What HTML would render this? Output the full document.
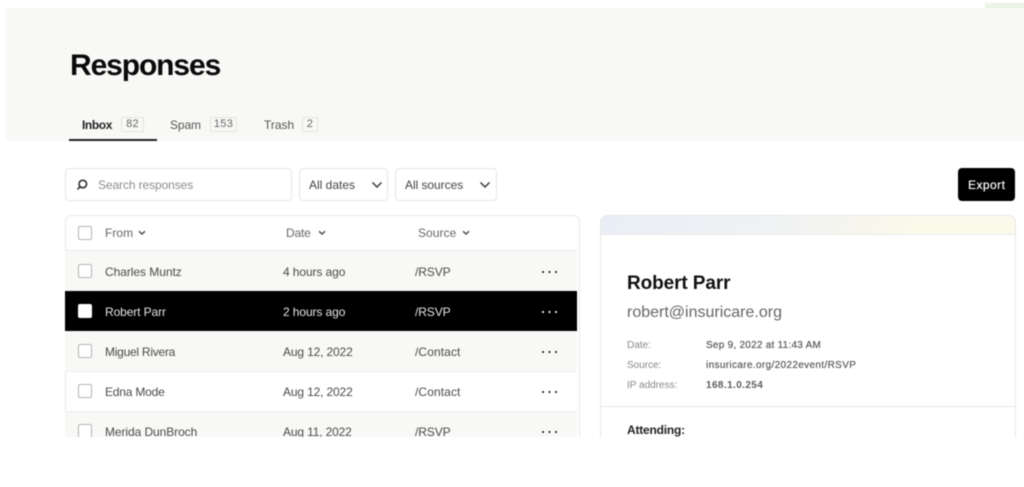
<!DOCTYPE html>
<html>
<head>
<meta charset="utf-8">
<style>
html,body{margin:0;padding:0;background:#fff;}
#p{position:relative;width:1024px;height:487px;overflow:hidden;background:#fff;font-family:"Liberation Sans",sans-serif;filter:blur(0.45px);}
#p div,#p svg{position:absolute;}
.t{white-space:nowrap;line-height:16px;height:16px;font-size:12px;color:#4a4a4a;letter-spacing:-.1px;}
.box{border:1px solid #e6e6e4;border-radius:4px;background:#fff;box-sizing:border-box;}
.badge{border:1px solid #e4e4e0;border-radius:2px;box-sizing:border-box;height:15px;top:117px;background:#f8f8f6;font-size:11px;line-height:13px;text-align:center;color:#666;letter-spacing:.3px;}
.cb{width:14px;height:14px;left:78px;border:1px solid #b4b4b4;border-radius:2px;box-sizing:border-box;background:#fff;}
.dots{left:542px;width:16px;height:2px;background-image:radial-gradient(circle at 1px 1px,#222 1px,transparent 1.1px);background-size:6.5px 2px;}
.r{left:65px;width:512px;}
.l{font-size:10px;color:#888;left:627px;letter-spacing:0;}
.v{font-size:10px;color:#5c5c5c;left:706px;font-weight:700;}
</style>
</head>
<body>
<div id="p">
  <div style="left:985px;top:3px;width:39px;height:5px;background:#e9f3e6;"></div>
  <div style="left:6px;top:8px;width:1018px;height:133px;background:#f8f8f6;"></div>
  <div class="t" style="left:70px;top:47px;height:38px;line-height:38px;font-size:30px;font-weight:700;color:#0a0a0a;letter-spacing:-1.1px;">Responses</div>

  <div class="t" style="left:82px;top:117px;font-weight:700;color:#222;letter-spacing:-.4px;">Inbox</div>
  <div class="badge" style="left:121px;width:23px;">82</div>
  <div class="t" style="left:170px;top:117px;color:#555;letter-spacing:-.1px;">Spam</div>
  <div class="badge" style="left:210px;width:27px;">153</div>
  <div class="t" style="left:264px;top:117px;color:#555;letter-spacing:0;">Trash</div>
  <div class="badge" style="left:302px;width:16px;">2</div>
  <div style="left:69px;top:139px;width:88px;height:2px;background:#222;"></div>

  <div class="box" style="left:65px;top:168px;width:227px;height:33px;"></div>
  <svg style="left:75px;top:178px;" width="14" height="14" viewBox="0 0 14 14" fill="none" stroke="#222" stroke-width="1.5"><circle cx="7.8" cy="6" r="3.8"/><path d="M5 8.8L2.4 11.400"/></svg>
  <div class="t" style="left:98px;top:177px;color:#8c8c8c;">Search responses</div>
  <div class="box" style="left:299px;top:168px;width:89px;height:33px;"></div>
  <div class="t" style="left:309px;top:177px;color:#444;letter-spacing:0;">All dates</div>
  <svg style="left:371px;top:181px;" width="12" height="8" viewBox="0 0 12 8" fill="none" stroke="#333" stroke-width="1.4"><path d="M1.5 1.5L6 6L10.500 1.500"/></svg>
  <div class="box" style="left:395px;top:168px;width:102px;height:33px;"></div>
  <div class="t" style="left:405px;top:177px;color:#444;letter-spacing:-.05px;">All sources</div>
  <svg style="left:479px;top:181px;" width="12" height="8" viewBox="0 0 12 8" fill="none" stroke="#333" stroke-width="1.4"><path d="M1.5 1.5L6 6L10.500 1.500"/></svg>
  <div style="left:958px;top:168px;width:57px;height:33px;background:#000;border-radius:4px;"></div>
  <div class="t" style="left:968px;top:177px;color:#fff;letter-spacing:.45px;text-shadow:0 0 .5px #fff;">Export</div>

  <!-- table -->
  <div style="left:65px;top:215px;width:515px;height:240px;border:1px solid #e8e8e6;border-radius:7px;box-sizing:border-box;background:#fff;"></div>
  <div class="r" style="top:250px;height:1px;background:#e8e8e6;"></div>
  <div class="cb" style="top:226px;"></div>
  <div class="t" style="left:105px;top:225px;color:#666;letter-spacing:.05px;">From</div>
  <svg style="left:138px;top:230px;" width="8" height="6" viewBox="0 0 8 6" fill="none" stroke="#333" stroke-width="1.2"><path d="M1 1.200L4 4.200L7 1.200"/></svg>
  <div class="t" style="left:286px;top:225px;color:#666;letter-spacing:-.2px;">Date</div>
  <svg style="left:318px;top:230px;" width="8" height="6" viewBox="0 0 8 6" fill="none" stroke="#333" stroke-width="1.2"><path d="M1 1.200L4 4.200L7 1.200"/></svg>
  <div class="t" style="left:418px;top:225px;color:#666;letter-spacing:.05px;">Source</div>
  <svg style="left:462px;top:230px;" width="8" height="6" viewBox="0 0 8 6" fill="none" stroke="#333" stroke-width="1.2"><path d="M1 1.200L4 4.200L7 1.200"/></svg>

  <div class="r" style="top:251px;height:40px;background:#f8f8f6;"></div>
  <div class="cb" style="top:264px;"></div>
  <div class="t" style="left:105px;top:264px;letter-spacing:-.05px;">Charles Muntz</div>
  <div class="t" style="left:283px;top:264px;">4 hours ago</div>
  <div class="t" style="left:415px;top:264px;">/RSVP</div>
  <div class="dots" style="top:271px;"></div>

  <div class="r" style="top:291px;height:40px;background:#000;"></div>
  <div class="cb" style="top:304px;border-color:#fff;"></div>
  <div class="t" style="left:105px;top:304px;color:#e4e4e4;">Robert Parr</div>
  <div class="t" style="left:283px;top:304px;color:#e4e4e4;">2 hours ago</div>
  <div class="t" style="left:415px;top:304px;color:#e4e4e4;">/RSVP</div>
  <div class="dots" style="top:311px;background-image:radial-gradient(circle at 1px 1px,#fff 1px,transparent 1.1px);"></div>

  <div class="r" style="top:331px;height:40px;background:#f8f8f6;"></div>
  <div class="r" style="top:371px;height:1px;background:#ececea;"></div>
  <div class="cb" style="top:344px;"></div>
  <div class="t" style="left:105px;top:344px;letter-spacing:-.25px;">Miguel Rivera</div>
  <div class="t" style="left:283px;top:344px;letter-spacing:-.15px;">Aug 12, 2022</div>
  <div class="t" style="left:415px;top:344px;letter-spacing:.1px;">/Contact</div>
  <div class="dots" style="top:351px;"></div>

  <div class="r" style="top:411px;height:1px;background:#ececea;"></div>
  <div class="cb" style="top:384px;"></div>
  <div class="t" style="left:105px;top:384px;letter-spacing:-.2px;">Edna Mode</div>
  <div class="t" style="left:283px;top:384px;letter-spacing:-.15px;">Aug 12, 2022</div>
  <div class="t" style="left:415px;top:384px;letter-spacing:.1px;">/Contact</div>
  <div class="dots" style="top:391px;"></div>

  <div class="r" style="top:412px;height:40px;background:#f8f8f6;"></div>
  <div class="cb" style="top:424px;"></div>
  <div class="t" style="left:105px;top:424px;letter-spacing:-.08px;">Merida DunBroch</div>
  <div class="t" style="left:283px;top:424px;letter-spacing:-.15px;">Aug 11, 2022</div>
  <div class="t" style="left:415px;top:424px;">/RSVP</div>
  <div class="dots" style="top:431px;"></div>

  <!-- right panel -->
  <div style="left:600px;top:215px;width:416px;height:240px;border:1px solid #e8e8e6;border-radius:7px;box-sizing:border-box;background:#fff;overflow:hidden;">
    <div style="left:0;top:0;width:414px;height:18px;background:linear-gradient(90deg,#e9eef6 0%,#f1f3f3 45%,#fbf9ea 75%,#fbf9ea 100%);border-bottom:1px solid #ececea;"></div>
  </div>
  <div class="t" style="left:627px;top:272px;height:24px;line-height:24px;font-size:19px;font-weight:700;color:#111;letter-spacing:-.1px;">Robert Parr</div>
  <div class="t" style="left:627px;top:302px;height:22px;line-height:22px;font-size:16px;color:#666;letter-spacing:0;">robert@insuricare.org</div>
  <div class="t l" style="top:338px;">Date:</div>
  <div class="t v" style="top:338px;font-weight:400;letter-spacing:.25px;text-shadow:0 0 .4px #555;">Sep 9, 2022 at 11:43 AM</div>
  <div class="t l" style="top:358px;">Source:</div>
  <div class="t v" style="top:358px;font-weight:400;letter-spacing:.35px;text-shadow:0 0 .4px #555;">insuricare.org/2022event/RSVP</div>
  <div class="t l" style="top:378px;">IP address:</div>
  <div class="t v" style="top:378px;letter-spacing:.4px;">168.1.0.254</div>
  <div style="left:601px;top:406px;width:414px;height:1px;background:#e8e8e6;"></div>
  <div class="t" style="left:627px;top:422px;font-weight:700;color:#222;letter-spacing:-.2px;">Attending:</div>

  <!-- white bottom cover -->
  <div style="left:0;top:437px;width:1024px;height:50px;background:#fff;"></div>
</div>
</body>
</html>
